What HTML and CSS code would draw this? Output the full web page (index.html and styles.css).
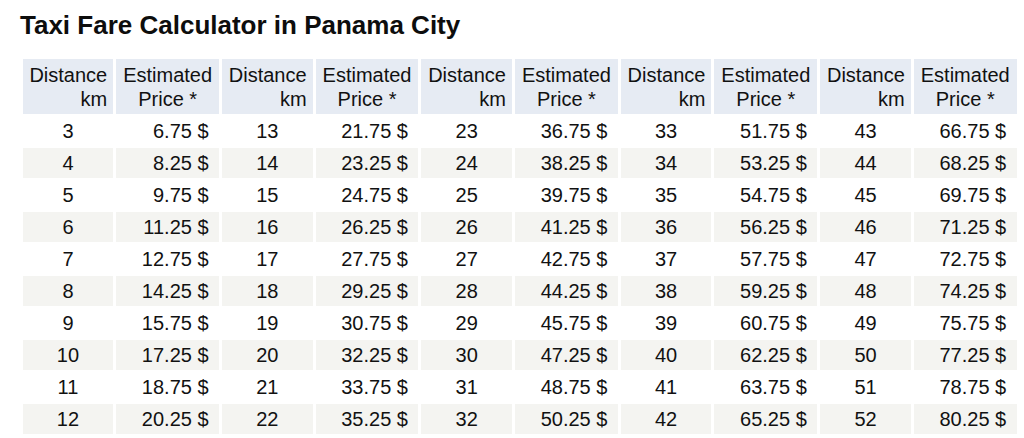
FILE: index.html
```html
<!DOCTYPE html>
<html lang="en">
<head>
<meta charset="utf-8">
<title>Taxi Fare Calculator in Panama City</title>
<link rel="stylesheet" href="styles.css">
</head>
<body>
<main class="page">
<h1 class="title">Taxi Fare Calculator in Panama City</h1>
<table class="fares">
<colgroup>
<col class="c-dist"><col class="c-price"><col class="c-dist"><col class="c-price"><col class="c-dist"><col class="c-price"><col class="c-dist"><col class="c-price"><col class="c-dist"><col class="c-price">
</colgroup>
<thead>
<tr>
<th class="h-dist">Distance<br>km</th><th class="h-price">Estimated<br>Price *</th>
<th class="h-dist">Distance<br>km</th><th class="h-price">Estimated<br>Price *</th>
<th class="h-dist">Distance<br>km</th><th class="h-price">Estimated<br>Price *</th>
<th class="h-dist">Distance<br>km</th><th class="h-price">Estimated<br>Price *</th>
<th class="h-dist">Distance<br>km</th><th class="h-price">Estimated<br>Price *</th>
</tr>
</thead>
<tbody>
<tr><td class="dist">3</td><td class="price">6.75 $</td><td class="dist">13</td><td class="price">21.75 $</td><td class="dist">23</td><td class="price">36.75 $</td><td class="dist">33</td><td class="price">51.75 $</td><td class="dist">43</td><td class="price">66.75 $</td></tr>
<tr><td class="dist">4</td><td class="price">8.25 $</td><td class="dist">14</td><td class="price">23.25 $</td><td class="dist">24</td><td class="price">38.25 $</td><td class="dist">34</td><td class="price">53.25 $</td><td class="dist">44</td><td class="price">68.25 $</td></tr>
<tr><td class="dist">5</td><td class="price">9.75 $</td><td class="dist">15</td><td class="price">24.75 $</td><td class="dist">25</td><td class="price">39.75 $</td><td class="dist">35</td><td class="price">54.75 $</td><td class="dist">45</td><td class="price">69.75 $</td></tr>
<tr><td class="dist">6</td><td class="price">11.25 $</td><td class="dist">16</td><td class="price">26.25 $</td><td class="dist">26</td><td class="price">41.25 $</td><td class="dist">36</td><td class="price">56.25 $</td><td class="dist">46</td><td class="price">71.25 $</td></tr>
<tr><td class="dist">7</td><td class="price">12.75 $</td><td class="dist">17</td><td class="price">27.75 $</td><td class="dist">27</td><td class="price">42.75 $</td><td class="dist">37</td><td class="price">57.75 $</td><td class="dist">47</td><td class="price">72.75 $</td></tr>
<tr><td class="dist">8</td><td class="price">14.25 $</td><td class="dist">18</td><td class="price">29.25 $</td><td class="dist">28</td><td class="price">44.25 $</td><td class="dist">38</td><td class="price">59.25 $</td><td class="dist">48</td><td class="price">74.25 $</td></tr>
<tr><td class="dist">9</td><td class="price">15.75 $</td><td class="dist">19</td><td class="price">30.75 $</td><td class="dist">29</td><td class="price">45.75 $</td><td class="dist">39</td><td class="price">60.75 $</td><td class="dist">49</td><td class="price">75.75 $</td></tr>
<tr><td class="dist">10</td><td class="price">17.25 $</td><td class="dist">20</td><td class="price">32.25 $</td><td class="dist">30</td><td class="price">47.25 $</td><td class="dist">40</td><td class="price">62.25 $</td><td class="dist">50</td><td class="price">77.25 $</td></tr>
<tr><td class="dist">11</td><td class="price">18.75 $</td><td class="dist">21</td><td class="price">33.75 $</td><td class="dist">31</td><td class="price">48.75 $</td><td class="dist">41</td><td class="price">63.75 $</td><td class="dist">51</td><td class="price">78.75 $</td></tr>
<tr><td class="dist">12</td><td class="price">20.25 $</td><td class="dist">22</td><td class="price">35.25 $</td><td class="dist">32</td><td class="price">50.25 $</td><td class="dist">42</td><td class="price">65.25 $</td><td class="dist">52</td><td class="price">80.25 $</td></tr>
</tbody>
</table>
</main>
</body>
</html>
```

FILE: styles.css
```css
html, body {
  margin: 0;
  padding: 0;
  background: #ffffff;
}

.page {
  padding: 9.5px 0 0 20px;
  font-family: "Liberation Sans", Arial, sans-serif;
  color: #111111;
}

.title {
  margin: 0 0 17.5px 0;
  font-size: 26px;
  line-height: 30px;
  font-weight: bold;
  color: #0d0d0d;
}

.fares {
  table-layout: fixed;
  width: 1000px;
  border-collapse: separate;
  border-spacing: 3px 2px;
  margin-left: -0.3px;
  font-size: 20px;
  line-height: 24px;
}

.c-dist {
  width: 90.5px;
}

.c-price {
  width: 102.9px;
}

.fares th {
  background: #e6ebf3;
  font-weight: normal;
  padding: 3.6px 6px;
  height: 48px;
  white-space: nowrap;
}

.h-dist {
  text-align: right;
}

.h-price {
  text-align: center;
}

.fares td {
  height: 30px;
  padding: 0;
  white-space: nowrap;
}

.fares tbody tr:nth-child(even) td {
  background: #f4f4f1;
}

.dist {
  text-align: center;
}

.price {
  text-align: right;
  padding-right: 10.5px !important;
}
```
